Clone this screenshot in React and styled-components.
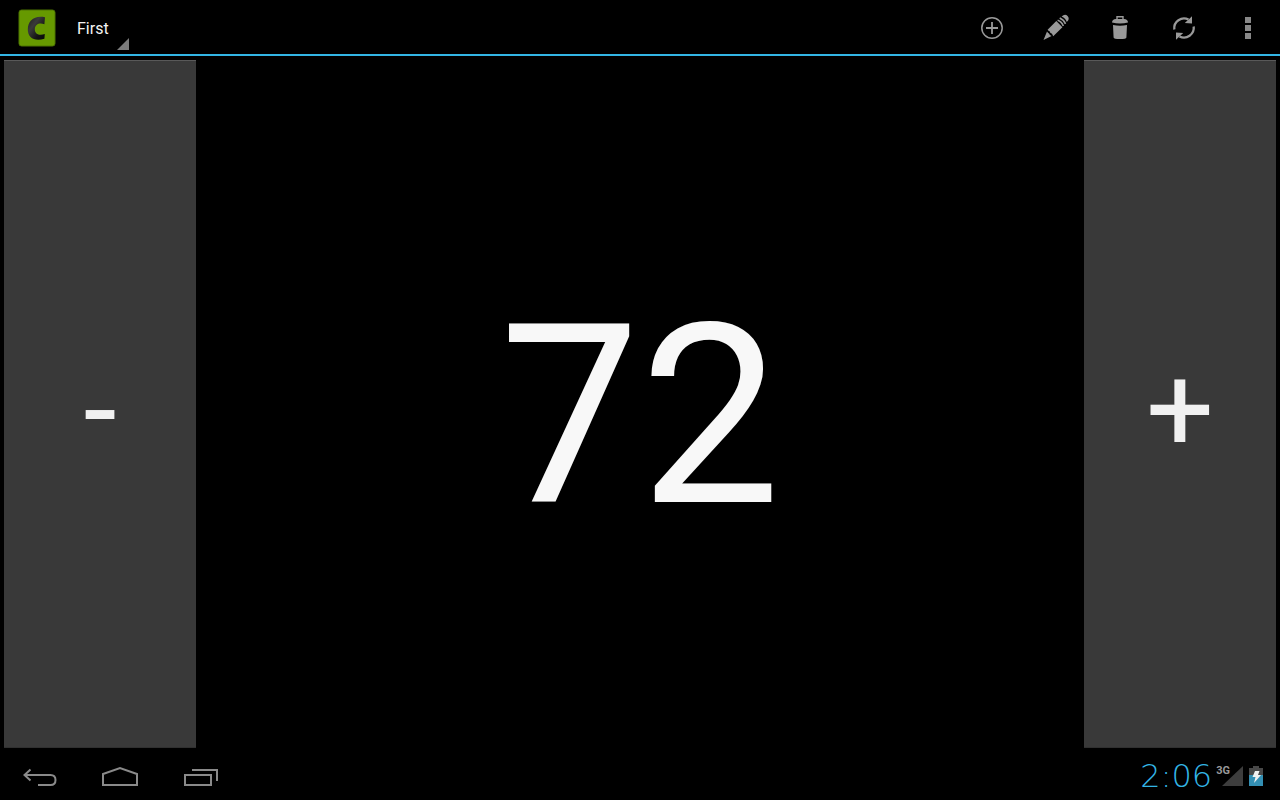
import React, { useState } from "react";
import styled, { createGlobalStyle } from "styled-components";

const GlobalStyle = createGlobalStyle`
  * { box-sizing: border-box; }
  body { margin: 0; background: #000; color: #fff; font-family: Roboto, "Liberation Sans", sans-serif; }
`;

const Screen = styled.div`
  min-height: 100vh;
  display: flex;
  flex-direction: column;
  background: #000;
`;

const ActionBar = styled.header`
  height: 56px;
  display: flex;
  align-items: center;
  padding-left: 16px;
  border-bottom: 2px solid #33b5e5;
`;

const Logo = styled.svg`
  width: 42px;
  height: 42px;
  display: block;
`;

const Spinner = styled.label`
  display: flex;
  align-self: stretch;
  align-items: flex-end;
  padding: 0 0 4px 12px;
`;

const CounterSelect = styled.select`
  appearance: none;
  width: 47px;
  height: 42px;
  padding: 0 0 0 7px;
  border: 0;
  background: transparent;
  color: #f3f3f3;
  font: 16px/42px Roboto, "Liberation Sans", sans-serif;
`;

const SpinnerMark = styled.svg`
  width: 12px;
  height: 12px;
  fill: #7b7b7b;
`;

const Actions = styled.div`
  display: flex;
  align-self: stretch;
  margin-left: auto;
`;

const IconButton = styled.button`
  width: 64px;
  display: flex;
  align-items: center;
  justify-content: center;
  padding: 0;
  border: 0;
  background: transparent;
  color: #999;
`;

const ActionIcon = styled.svg`
  width: 32px;
  height: 32px;
  fill: none;
  stroke: currentColor;
`;

const Counter = styled.main`
  flex: 1;
  display: grid;
  grid-template-columns: 192px 1fr 192px;
  padding: 4px;
`;

const StepButton = styled.button`
  padding: 12px 0 0;
  border: 0;
  border-top: 1px solid #595959;
  border-bottom: 1px solid #303030;
  background: #393939;
  color: #f1f1f1;
  font: 120px/140px Roboto, "Liberation Sans", sans-serif;
`;

const Value = styled.output`
  display: flex;
  align-items: center;
  justify-content: center;
  padding-top: 26px;
  color: #f8f8f8;
  font-size: 250px;
  line-height: 292px;
`;

const SystemBar = styled.footer`
  height: 48px;
  display: flex;
  align-items: center;
  justify-content: space-between;
  padding-right: 15px;
`;

const NavKeys = styled.nav`
  display: flex;
`;

const NavKey = styled.button`
  width: 80px;
  height: 48px;
  padding: 0;
  border: 0;
  background: transparent;
  color: #8a8a8a;
`;

const NavIcon = styled.svg`
  width: 80px;
  height: 48px;
  display: block;
  fill: none;
  stroke: currentColor;
  stroke-width: 2;
`;

const Status = styled.div`
  display: flex;
  align-items: center;
  gap: 4px;
`;

const Clock = styled.time`
  color: #33b5e5;
  font: 200 32px/48px "DejaVu Sans", sans-serif;
`;

const Signal = styled.div`
  display: flex;
  align-items: flex-start;
`;

const Network = styled.span`
  color: #999;
  font: bold 11px/12px Roboto, sans-serif;
  margin-right: -9px;
  z-index: 1;
`;

const SignalIcon = styled.svg`
  width: 22px;
  height: 22px;
`;

const BatteryIcon = styled.svg`
  width: 18px;
  height: 22px;
`;

export default function App() {
  const [count, setCount] = useState(72);
  return (
    <Screen>
      <GlobalStyle />
      <ActionBar>
        <Logo viewBox="0 0 42 42" role="img" aria-label="Counter">
          <defs>
            <linearGradient id="letter" x1="0" y1="0" x2="1" y2="1">
              <stop offset="0" stopColor="#1c1c1c" />
              <stop offset=".35" stopColor="#3a3a3a" />
              <stop offset=".7" stopColor="#141414" />
              <stop offset="1" stopColor="#080808" />
            </linearGradient>
          </defs>
          <rect x="3" y="4" width="36" height="36" rx="2.5" fill="#669900" stroke="#4d7400" />
          <path d="M29 11.2 28.4 18.2C23.4 16.6 19 18.2 18.8 23.2 18.8 28.2 23.4 29.8 28.8 28L28.4 32.8C18 35.6 11.8 31.6 11.8 23.4 11.8 14.2 18.8 9 29 11.2Z" fill="url(#letter)" />
        </Logo>
        <Spinner>
          <CounterSelect aria-label="Counter name" defaultValue="First">
            <option>First</option>
          </CounterSelect>
          <SpinnerMark viewBox="0 0 12 12"><path d="M12 0V12H0Z" /></SpinnerMark>
        </Spinner>
        <Actions>
          <IconButton aria-label="Add counter">
            <ActionIcon viewBox="0 0 32 32">
              <circle cx="16" cy="17" r="10.2" strokeWidth="1.5" />
              <path d="M16 11v12M10 17h12" strokeWidth="1.8" />
            </ActionIcon>
          </IconButton>
          <IconButton aria-label="Edit counter">
            <ActionIcon viewBox="0 0 32 32">
              <g fill="currentColor" stroke="none">
                <path d="M3.5 29 7 20.4Q8 22 9 22.5 9.6 24.4 11.6 25Z" />
                <path d="M7.6 18.8 16.3 10.1 22.4 16.2 13.2 25.2Q12.4 23.8 12 22.8 9.8 22.1 9.6 20.2 8.3 19.9 7.6 18.8Z" />
                <path d="M21.6 5.4Q25 2.4 27.6 5 30.2 8 26.8 11Q25.6 7 21.6 5.4Z" />
              </g>
              <path d="M17.6 9.2Q21.8 10.5 23.3 15M19.7 7.1Q24 9 25.5 12.9" strokeWidth="1.6" />
            </ActionIcon>
          </IconButton>
          <IconButton aria-label="Delete counter">
            <ActionIcon viewBox="0 0 32 32">
              <path d="M13 9V5.7h6V9" strokeWidth="1.4" />
              <path d="M8 11.6Q8.2 8 12 8h8q3.8 0 4 3.6-8 2-16 0ZM9 14Q16 15.4 23 14L22.4 26.4Q22.2 28 16 28T9.6 26.4Z" fill="currentColor" stroke="none" />
            </ActionIcon>
          </IconButton>
          <IconButton aria-label="Reset counter">
            <ActionIcon viewBox="0 0 32 32">
              <path d="M6.3 18.5A9.8 9.8 0 0 1 20.5 8.6M25.7 15.5A9.8 9.8 0 0 1 11.5 25.4" strokeWidth="2.3" />
              <path d="M24 5.3v7.1l-7.2-.5ZM8 28.7v-7.1l7.2.5Z" fill="currentColor" stroke="none" />
            </ActionIcon>
          </IconButton>
          <IconButton aria-label="More options">
            <ActionIcon viewBox="0 0 32 32">
              <path d="M13 6h6v6h-6ZM13 14h6v6h-6ZM13 22h6v6h-6Z" fill="#888" stroke="none" />
            </ActionIcon>
          </IconButton>
        </Actions>
      </ActionBar>
      <Counter>
        <StepButton aria-label="Decrease" onClick={() => setCount(count - 1)}>-</StepButton>
        <Value>{count}</Value>
        <StepButton aria-label="Increase" onClick={() => setCount(count + 1)}>+</StepButton>
      </Counter>
      <SystemBar>
        <NavKeys>
          <NavKey aria-label="Back">
            <NavIcon viewBox="0 0 80 48">
              <path d="M30.5 17.5 24.5 23 30.5 28.5M25 23H50.5Q55.5 23 55.5 28T50.5 33H38" />
            </NavIcon>
          </NavKey>
          <NavKey aria-label="Home">
            <NavIcon viewBox="0 0 80 48"><path d="M23 33V22L40 16 57 22V33Z" /></NavIcon>
          </NavKey>
          <NavKey aria-label="Recent apps">
            <NavIcon viewBox="0 0 80 48"><path d="M25 23H51V33H25ZM32 18H57V29" /></NavIcon>
          </NavKey>
        </NavKeys>
        <Status>
          <Clock>2:06</Clock>
          <Signal>
            <Network>3G</Network>
            <SignalIcon viewBox="0 0 22 22"><path d="M22 1V21H1Z" fill="#3d3d3d" /></SignalIcon>
          </Signal>
          <BatteryIcon viewBox="0 0 18 22">
            <path d="M2 3h4V1h6v2h4v7H2Z" fill="#484848" />
            <path d="M2 10h14v11H2Z" fill="#338fb3" />
            <path d="M8 6h4.5L11 10h3l-7 8 1.5-6H5.5Z" fill="#f1f1f1" />
          </BatteryIcon>
        </Status>
      </SystemBar>
    </Screen>
  );
}
